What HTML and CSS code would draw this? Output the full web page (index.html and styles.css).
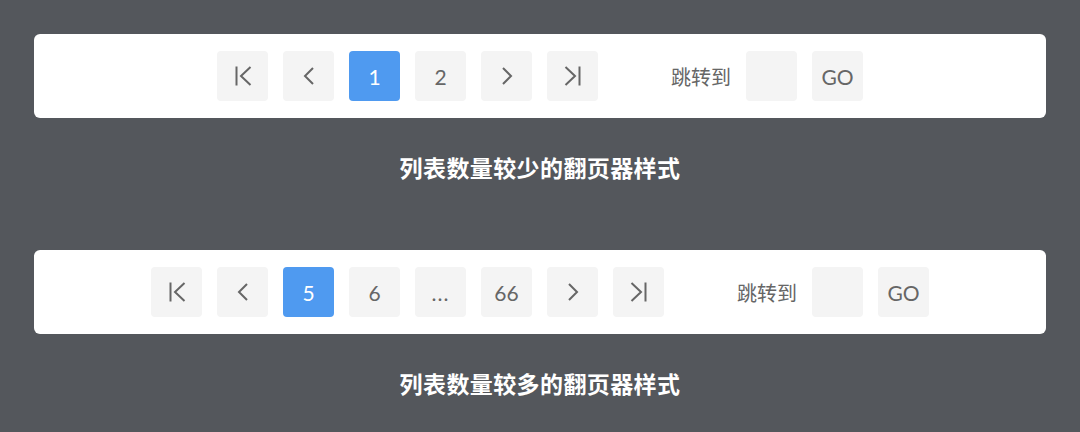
FILE: index.html
```html
<!DOCTYPE html>
<html lang="zh-CN">
<head>
  <meta charset="UTF-8">
  <title>翻页器样式</title>
  <link rel="stylesheet" href="styles.css">
</head>
<body>

  <div class="demo">
    <div class="pager-card">
      <div class="pager">
        <button class="page-btn" title="首页">
          <svg viewBox="0 0 20 20"><path d="M3.5 0.5V19.5M17.5 1L8 10L17.5 19"/></svg>
        </button>
        <button class="page-btn" title="上一页">
          <svg viewBox="0 0 20 20"><path d="M14 2L6 10L14 18"/></svg>
        </button>
        <button class="page-btn active">1</button>
        <button class="page-btn">2</button>
        <button class="page-btn" title="下一页">
          <svg viewBox="0 0 20 20"><path d="M6 2L14 10L6 18"/></svg>
        </button>
        <button class="page-btn" title="末页">
          <svg viewBox="0 0 20 20"><path d="M16.5 0.5V19.5M2.5 1L12 10L2.5 19"/></svg>
        </button>

        <div class="jump">
          <span class="jump-label">跳转到</span>
          <input class="jump-input" type="text">
          <button class="page-btn">GO</button>
        </div>
      </div>
    </div>
    <p class="caption">列表数量较少的翻页器样式</p>
  </div>

  <div class="demo">
    <div class="pager-card">
      <div class="pager">
        <button class="page-btn" title="首页">
          <svg viewBox="0 0 20 20"><path d="M3.5 0.5V19.5M17.5 1L8 10L17.5 19"/></svg>
        </button>
        <button class="page-btn" title="上一页">
          <svg viewBox="0 0 20 20"><path d="M14 2L6 10L14 18"/></svg>
        </button>
        <button class="page-btn active">5</button>
        <button class="page-btn">6</button>
        <button class="page-btn dots">...</button>
        <button class="page-btn">66</button>
        <button class="page-btn" title="下一页">
          <svg viewBox="0 0 20 20"><path d="M6 2L14 10L6 18"/></svg>
        </button>
        <button class="page-btn" title="末页">
          <svg viewBox="0 0 20 20"><path d="M16.5 0.5V19.5M2.5 1L12 10L2.5 19"/></svg>
        </button>

        <div class="jump">
          <span class="jump-label">跳转到</span>
          <input class="jump-input" type="text">
          <button class="page-btn">GO</button>
        </div>
      </div>
    </div>
    <p class="caption">列表数量较多的翻页器样式</p>
  </div>

</body>
</html>
```

FILE: styles.css
```css
* {
  box-sizing: border-box;
}

body {
  margin: 0;
  padding: 34px 34px 0;
  background: #54575c;
  font-family: 'Lato', 'Noto Sans CJK SC', sans-serif;
}

.pager-card {
  background: white;
  border-radius: 6px;
  height: 84px;
  display: flex;
  justify-content: center;
  align-items: center;
}

.pager {
  display: flex;
  align-items: center;
  gap: 15px;
}

.page-btn {
  width: 51px;
  height: 50px;
  padding: 0;
  border: none;
  border-radius: 4px;
  background: #f4f4f4;
  color: #666;
  font-family: 'Lato', sans-serif;
  font-size: 21px;
  display: flex;
  justify-content: center;
  align-items: center;
  cursor: pointer;
}

.page-btn svg {
  width: 20px;
  height: 20px;
  fill: none;
  stroke: #666;
  stroke-width: 2;
}

.page-btn.active {
  background: #4f9af0;
  color: white;
}

.page-btn.dots {
  font-size: 21px;
  letter-spacing: 1px;
}

.jump {
  display: flex;
  align-items: center;
  gap: 15px;
  margin-left: 58px;
}

.jump-label {
  font-family: 'Noto Sans CJK SC', sans-serif;
  font-size: 20px;
  color: #666;
}

.jump-input {
  width: 51px;
  height: 50px;
  border: none;
  border-radius: 4px;
  background: #f4f4f4;
  outline: none;
}

.caption {
  margin: 0;
  height: 132px;
  padding-top: 34px;
  text-align: center;
  color: white;
  font-family: 'Noto Sans CJK SC', sans-serif;
  font-weight: bold;
  font-size: 23px;
  line-height: 30px;
  letter-spacing: 0.4px;
}

.demo:last-child .caption {
  height: auto;
}
```
